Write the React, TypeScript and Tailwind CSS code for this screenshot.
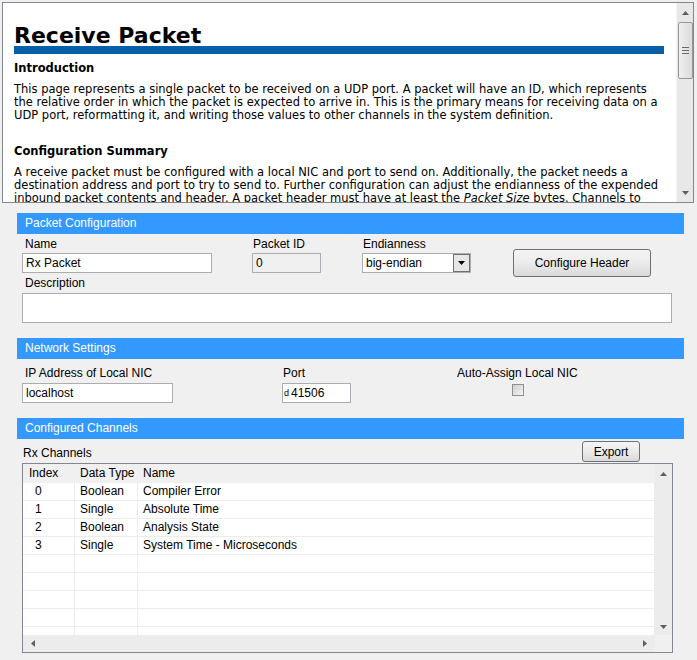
import React from 'react';

const ui = { fontFamily: '"Liberation Sans", Arial, sans-serif' };
const doc = { fontFamily: '"DejaVu Sans", Verdana, sans-serif' };

function SectionBar({ title }: { title: string }) {
  return (
    <div className="h-[21px] bg-[#3399ff] text-white text-[12px] leading-[21px] pl-[8px]">{title}</div>
  );
}

function Arrow({ dir, className = '' }: { dir: 'up' | 'down' | 'left' | 'right'; className?: string }) {
  const pts = {
    up: '0,4 3.5,0 7,4',
    down: '0,0 3.5,4 7,0',
    left: '4,0 0,3.5 4,7',
    right: '0,0 4,3.5 0,7',
  }[dir];
  const vb = dir === 'up' || dir === 'down' ? '0 0 7 4' : '0 0 4 7';
  const size = dir === 'up' || dir === 'down' ? 'w-[7px] h-[4px]' : 'w-[4px] h-[7px]';
  return (
    <svg viewBox={vb} className={`${size} ${className}`}>
      <polygon points={pts} fill="#606060" />
    </svg>
  );
}

function Button({ label, className = '' }: { label: string; className?: string }) {
  return (
    <div
      className={`flex items-center justify-center rounded-[3px] border border-[#707070] bg-gradient-to-b from-[#f4f4f4] via-[#ebebeb] to-[#d9d9d9] text-[12px] text-black ${className}`}
    >
      {label}
    </div>
  );
}

const rows = [
  { i: '0', t: 'Boolean', n: 'Compiler Error' },
  { i: '1', t: 'Single', n: 'Absolute Time' },
  { i: '2', t: 'Boolean', n: 'Analysis State' },
  { i: '3', t: 'Single', n: 'System Time - Microseconds' },
  { i: '', t: '', n: '' },
  { i: '', t: '', n: '' },
  { i: '', t: '', n: '' },
  { i: '', t: '', n: '' },
  { i: '', t: '', n: '' },
];

export default function App() {
  return (
    <div className="w-[697px] h-[660px] bg-[#f0f0f0] overflow-hidden" style={ui}>
      {/* help pane */}
      <div className="ml-[2px] mt-[2px] w-[692px] h-[201px] border border-[#828790] flex">
        <div className="flex-1 bg-white pl-[11px] overflow-hidden text-black" style={doc}>
          <div className="mt-[16px] h-[27px] text-[22px] leading-[33px] font-bold whitespace-nowrap">Receive Packet</div>
          <div className="h-[8px] w-[650px] bg-[#0860a8]" />
          <div className="mt-[6px] h-[16px] text-[11.5px] leading-[16px] font-bold">Introduction</div>
          <div className="mt-[7px] text-[11.5px] leading-[13px] whitespace-nowrap">
            <div>This page represents a single packet to be received on a UDP port. A packet will have an ID, which represents</div>
            <div>the relative order in which the packet is expected to arrive in. This is the primary means for receiving data on a</div>
            <div>UDP port, reformatting it, and writing those values to other channels in the system definition.</div>
          </div>
          <div className="mt-[21px] h-[16px] text-[11.5px] leading-[16px] font-bold">Configuration Summary</div>
          <div className="mt-[7px] text-[11.5px] leading-[13px] whitespace-nowrap">
            <div>A receive packet must be configured with a local NIC and port to send on. Additionally, the packet needs a</div>
            <div>destination address and port to try to send to. Further configuration can adjust the endianness of the expended</div>
            <div>
              inbound packet contents and header. A packet header must have at least the <i>Packet Size</i> bytes. Channels to
            </div>
          </div>
        </div>
        <div className="w-[17px] bg-[#e8e8e8] border-l border-[#f4f4f4] flex flex-col items-center">
          <div className="h-[19px] flex items-center justify-center">
            <Arrow dir="up" />
          </div>
          <div className="w-[15px] h-[57px] rounded-[2px] border border-[#979797] bg-gradient-to-r from-[#f0f0f0] to-[#dadada] flex flex-col items-center justify-center gap-[2px]">
            <div className="w-[7px] h-px bg-[#6a6a6a]" />
            <div className="w-[7px] h-px bg-[#6a6a6a]" />
            <div className="w-[7px] h-px bg-[#6a6a6a]" />
          </div>
          <div className="flex-1" />
          <div className="h-[19px] flex items-center justify-center">
            <Arrow dir="down" />
          </div>
        </div>
      </div>

      <div className="ml-[17px] w-[667px] mt-[10px]">
        {/* Packet Configuration */}
        <SectionBar title="Packet Configuration" />
        <div className="flex items-start h-[39px] pl-[5px] text-[12px] text-black">
          <div className="w-[190px]">
            <div className="h-[19px] leading-[18px] pl-[3px] pt-[1px]">Name</div>
            <div className="h-[20px] bg-white border border-[#abadb3] pl-[3px] leading-[18px]">Rx Packet</div>
          </div>
          <div className="ml-[40px] w-[69px]">
            <div className="h-[19px] leading-[18px] pl-[1px] pt-[1px]">Packet ID</div>
            <div className="h-[20px] bg-[#f0f0f0] border border-[#abadb3] pl-[3px] leading-[18px]">0</div>
          </div>
          <div className="ml-[41px] w-[109px]">
            <div className="h-[19px] leading-[18px] pl-[1px] pt-[1px]">Endianness</div>
            <div className="h-[20px] bg-white border border-[#abadb3] flex items-center">
              <div className="flex-1 pl-[3px] leading-[18px]">big-endian</div>
              <div className="w-[17px] h-[18px] border border-[#707070] bg-[#e6e6e6] flex items-center justify-center">
                <svg viewBox="0 0 7 4" className="w-[7px] h-[4px]">
                  <polygon points="0,0 3.5,4 7,0" fill="#000" />
                </svg>
              </div>
            </div>
          </div>
          <Button label="Configure Header" className="ml-[42px] mt-[15px] w-[138px] h-[28px] shrink-0" />
        </div>
        <div className="pl-[5px] text-[12px] text-black">
          <div className="h-[20px] leading-[20px] pl-[3px]">Description</div>
          <div className="w-[650px] h-[30px] bg-white border border-[#abadb3]" />
        </div>

        {/* Network Settings */}
        <div className="mt-[15px]">
          <SectionBar title="Network Settings" />
        </div>
        <div className="flex items-start h-[44px] pl-[5px] text-[12px] text-black">
          <div className="w-[151px]">
            <div className="h-[24px] leading-[28px] pl-[3px]">IP Address of Local NIC</div>
            <div className="h-[20px] bg-white border border-[#abadb3] pl-[3px] leading-[18px]">localhost</div>
          </div>
          <div className="ml-[109px] w-[69px]">
            <div className="h-[24px] leading-[28px] pl-[1px]">Port</div>
            <div className="h-[20px] bg-white border border-[#abadb3] flex items-center leading-[18px]">
              <span className="text-[9px] pl-[1px] pr-[2px]">d</span>
              <span>41506</span>
            </div>
          </div>
          <div className="ml-[106px] flex flex-col items-start">
            <div className="h-[24px] leading-[28px]">Auto-Assign Local NIC</div>
            <div className="ml-[55px] mt-[1px] w-[12px] h-[12px] border border-[#8f8f8f] bg-gradient-to-br from-[#d0d0d0] to-[#f4f4f4]" />
          </div>
        </div>

        {/* Configured Channels */}
        <div className="mt-[15px]">
          <SectionBar title="Configured Channels" />
        </div>
        <div className="flex items-end pl-[6px] pr-[44px] h-[24px] text-[12px] text-black">
          <div className="flex-1 leading-[16px] pb-[2px]">Rx Channels</div>
          <Button label="Export" className="w-[58px] h-[21px] mb-[1px]" />
        </div>
        <div className="ml-[5px] w-[651px] h-[190px] border border-[#828790] bg-white flex flex-col text-[12px] text-black">
          <div className="flex h-[171px]">
            <div className="flex-1 flex flex-col overflow-hidden">
              <div className="flex h-[19px] bg-[#f0f0f0] leading-[19px] shrink-0">
                <div className="w-[52px] pl-[6px]">Index</div>
                <div className="w-[63px] pl-[5px]">Data Type</div>
                <div className="flex-1 pl-[5px]">Name</div>
              </div>
              {rows.map((r, k) => (
                <div key={k} className="flex h-[18px] shrink-0 border-b border-[#ececec] leading-[17px]">
                  <div className="w-[52px] pl-[12px] border-r border-[#ececec]">{r.i}</div>
                  <div className="w-[63px] pl-[5px] border-r border-[#ececec]">{r.t}</div>
                  <div className="flex-1 pl-[5px] border-r border-[#ececec]">{r.n}</div>
                </div>
              ))}
            </div>
            <div className="w-[17px] bg-[#ececec] flex flex-col items-center">
              <div className="h-[19px] flex items-center justify-center">
                <Arrow dir="up" />
              </div>
              <div className="flex-1" />
              <div className="h-[17px] flex items-center justify-center">
                <Arrow dir="down" />
              </div>
            </div>
          </div>
          <div className="flex h-[17px] bg-[#ececec]">
            <div className="flex-1 flex items-center justify-between px-[8px]">
              <Arrow dir="left" />
              <Arrow dir="right" />
            </div>
            <div className="w-[17px] bg-[#f0f0f0]" />
          </div>
        </div>
      </div>
    </div>
  );
}
